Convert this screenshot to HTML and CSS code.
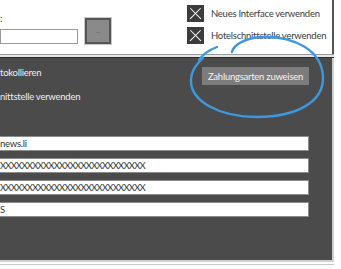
FILE: index.html
```html
<!DOCTYPE html>
<html lang="de">
<head>
    <meta charset="UTF-8">
    <meta name="viewport" content="width=device-width, initial-scale=1.0">
    <title>Einstellungen</title>
    <link rel="stylesheet" href="styles.css">
</head>
<body>

<div class="top">
    <div class="file">
        <span class="cut-label">:</span>
        <input type="text" class="path">
        <button class="browse">...</button>
    </div>
    <div class="checks">
        <div class="check"><span class="box"></span>Neues Interface verwenden</div>
        <div class="check"><span class="box"></span>Hotelschnittstelle verwenden</div>
    </div>
</div>

<div class="sep"></div>

<div class="frame">
    <div class="dark">
        <div class="row">
            <div class="labels">
                <div class="opt">tokollieren</div>
                <div class="opt">nittstelle verwenden</div>
            </div>
            <button class="pay">Zahlungsarten zuweisen</button>
        </div>

        <div class="fields">
            <div class="field">news.li</div>
            <div class="field xs">XXXXXXXXXXXXXXXXXXXXXXXXXXX</div>
            <div class="field xs">XXXXXXXXXXXXXXXXXXXXXXXXXXX</div>
            <div class="field">S</div>
        </div>
    </div>
</div>

<!-- hand drawn marker ring over the button -->
<svg class="marker" viewBox="0 0 341 269" width="341" height="269">
    <path d="M199,60 C203,54 209,50 217,47" />
    <path d="M232,52 C234,44 246,38 262,37 C294,36 322,50 323,77 C324,102 296,117 257,117 C219,117 191,101 191,81 C191,70 197,64 203,58" />
</svg>

</body>
</html>
```

FILE: styles.css
```css
body {
    margin: 0;
    background-color: #ffffff;
    font-family: Lato, "Open Sans", Arial, sans-serif;
    font-size: 9.5px;
    letter-spacing: -0.25px;
    width: 341px;
    height: 269px;
    overflow: hidden;
    position: relative;
}
.top {
    display: flex;
    width: 332px;
    height: 54px;
    border-right: 2px solid #555555;
    box-sizing: content-box;
}
.file {
    flex: none;
    display: flex;
    align-items: flex-end;
    height: 44px;
    width: 187px;
    position: relative;
}
.cut-label {
    position: absolute;
    left: 0;
    top: 13px;
    color: #333333;
}
.path {
    width: 78px;
    height: 15px;
    box-sizing: border-box;
    border: 1px solid #9a9a9a;
    padding: 0;
    margin: 0;
    background: #ffffff;
}
.browse {
    width: 26px;
    height: 26px;
    margin: 0 0 0 7px;
    padding: 0;
    background-color: #8a8a8a;
    border: 2px solid #555555;
    outline: 1px solid #c8c8c8;
    color: #5a5a5a;
    font-size: 7px;
    line-height: 10px;
    letter-spacing: -0.5px;
}
.checks {
    flex: none;
    display: flex;
    flex-direction: column;
    gap: 5px;
    padding-top: 5px;
}
.check {
    display: flex;
    align-items: center;
    gap: 7px;
    color: #3a3a3a;
    height: 17px;
    white-space: nowrap;
}
.box {
    flex: none;
    width: 17px;
    height: 17px;
    background-color: #3c3c3c;
    position: relative;
}
.box::before,
.box::after {
    content: "";
    position: absolute;
    left: 1px;
    top: 8px;
    width: 15px;
    height: 1.4px;
    background-color: #ffffff;
    transform: rotate(45deg);
}
.box::after {
    transform: rotate(-45deg);
}
.sep {
    width: 334px;
    height: 4px;
    border-top: 1px solid #9a9a9a;
    border-bottom: 1px solid #2e2e2e;
    background-color: #e6e6e6;
    box-sizing: border-box;
}
.frame {
    width: 334px;
    padding-bottom: 2px;
    border-bottom: 1px solid #c8c8c8;
}
.dark {
    background-color: #4b4b4b;
    height: 204px;
    box-sizing: border-box;
    padding-top: 8px;
    border-right: 2px solid #d0d0d0;
    border-bottom: 2px solid #d0d0d0;
}
.row {
    display: flex;
    justify-content: space-between;
    align-items: flex-start;
    width: 309px;
}
.labels {
    display: flex;
    flex-direction: column;
    gap: 10px;
}
.opt {
    color: #eeeeee;
    height: 14px;
    line-height: 14px;
}
.pay {
    margin-top: 1px;
    height: 18px;
    width: 107px;
    padding: 0;
    border: none;
    background-color: #7c7c7c;
    color: #f4f4f4;
    font-family: Lato, "Open Sans", Arial, sans-serif;
    font-size: 9.5px;
    letter-spacing: -0.25px;
    white-space: nowrap;
}
.fields {
    display: flex;
    flex-direction: column;
    gap: 7px;
    margin-top: 32px;
    width: 309px;
}
.field {
    height: 15px;
    box-sizing: border-box;
    background-color: #ffffff;
    border: 1px solid #8c8c8c;
    border-left: none;
    color: #333333;
    line-height: 13px;
    white-space: nowrap;
    overflow: hidden;
}
.field.xs {
    letter-spacing: -0.8px;
}
.marker {
    position: absolute;
    left: 0;
    top: 0;
    pointer-events: none;
}
.marker path {
    fill: none;
    stroke: #3d98dc;
    stroke-width: 2.4;
    stroke-linecap: round;
}
```
